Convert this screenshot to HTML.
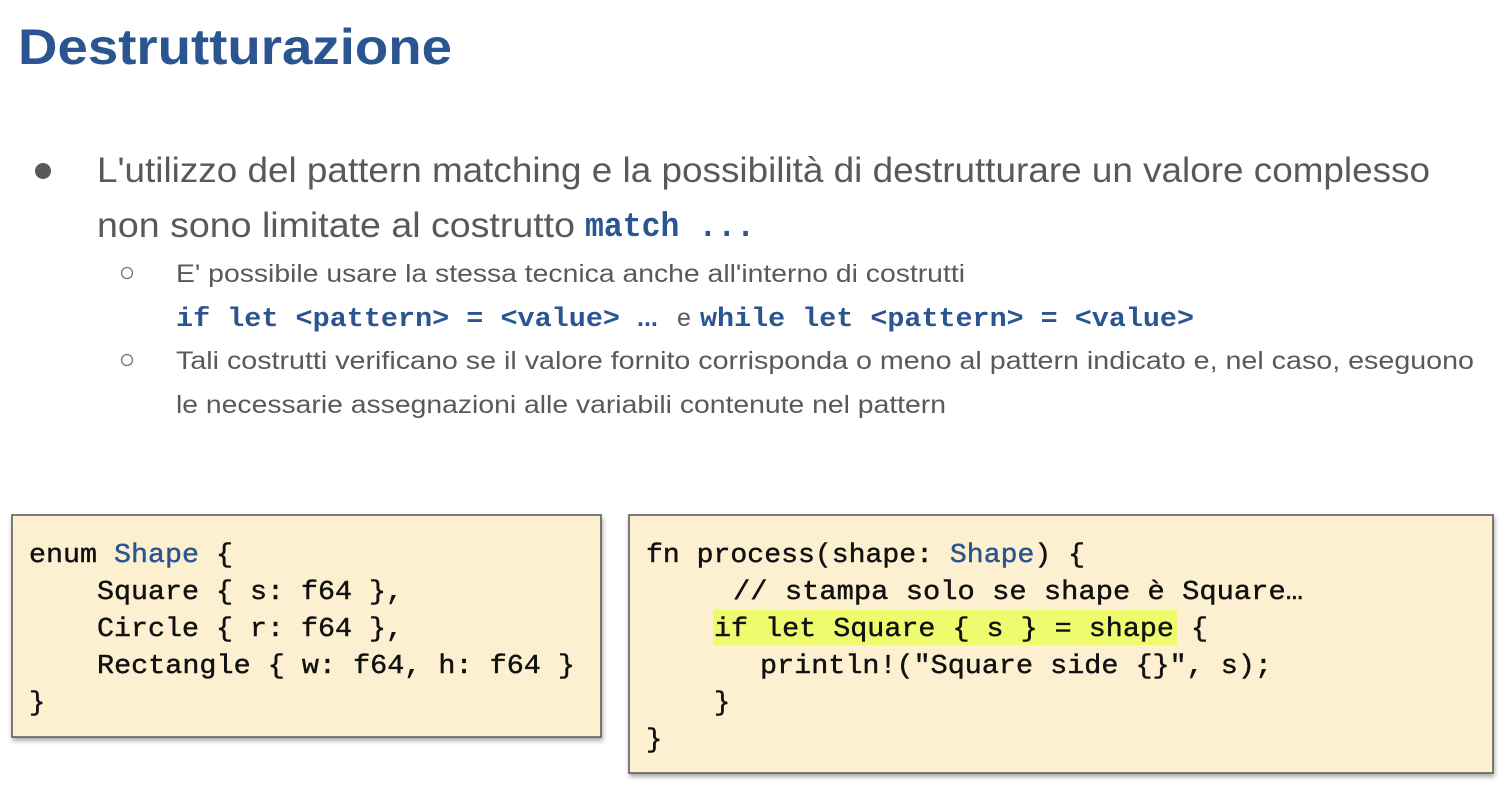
<!DOCTYPE html>
<html><head><meta charset="utf-8"><style>
html,body{margin:0;padding:0;background:#fff;}
svg{display:block;}
.s{font-family:"Liberation Sans",sans-serif;fill:#595959;}
.m{font-family:"Liberation Mono",monospace;}
.b{font-weight:bold;fill:#2b5591;}
.c{font-family:"Liberation Mono",monospace;font-size:27px;fill:#111;stroke:#111;stroke-width:0.45;}
.c tspan{stroke:#2b5591;}
</style></head><body>
<svg width="1512" height="796" viewBox="0 0 1512 796" xmlns="http://www.w3.org/2000/svg">
<defs>
<filter id="sh" x="-5%" y="-5%" width="110%" height="115%"><feDropShadow dx="1" dy="3" stdDeviation="2.5" flood-color="#000" flood-opacity="0.35"/></filter>
</defs>
<text x="18" y="64" font-family="Liberation Sans, sans-serif" font-weight="bold" font-size="50" fill="#2b5591" textLength="434" lengthAdjust="spacingAndGlyphs">Destrutturazione</text>

<circle cx="43" cy="171" r="8" fill="#595959"/>
<text class="s" x="97" y="182" font-size="35" textLength="1333" lengthAdjust="spacingAndGlyphs">L'utilizzo del pattern matching e la possibilità di destrutturare un valore complesso</text>
<text class="s" x="97" y="237" font-size="35" textLength="478" lengthAdjust="spacingAndGlyphs">non sono limitate al costrutto</text>
<text class="m b" x="585" y="236" font-size="34" textLength="170" lengthAdjust="spacingAndGlyphs">match ...</text>

<circle cx="127" cy="273" r="5.5" fill="none" stroke="#777" stroke-width="1.3"/>
<text class="s" x="176" y="282" font-size="25" textLength="789" lengthAdjust="spacingAndGlyphs">E' possibile usare la stessa tecnica anche all'interno di costrutti</text>
<text class="m b" x="176" y="326" font-size="27" textLength="444" lengthAdjust="spacingAndGlyphs">if let &lt;pattern&gt; = &lt;value&gt;</text>
<text class="s b" x="637" y="326" font-size="25" style="fill:#2b5591">...</text>
<text class="s" x="677" y="326" font-size="25">e</text>
<text class="m b" x="700" y="326" font-size="27" textLength="494" lengthAdjust="spacingAndGlyphs">while let &lt;pattern&gt; = &lt;value&gt;</text>
<circle cx="127" cy="360" r="5.5" fill="none" stroke="#777" stroke-width="1.3"/>
<text class="s" x="176" y="369" font-size="25" textLength="1298" lengthAdjust="spacingAndGlyphs">Tali costrutti verificano se il valore fornito corrisponda o meno al pattern indicato e, nel caso, eseguono</text>
<text class="s" x="176" y="413" font-size="25" textLength="770" lengthAdjust="spacingAndGlyphs">le necessarie assegnazioni alle variabili contenute nel pattern</text>

<rect x="12" y="515" width="589" height="222" fill="#fcf0d0" stroke="#555" stroke-width="1.5" filter="url(#sh)"/>
<text class="c" x="29" y="562" textLength="204" lengthAdjust="spacingAndGlyphs">enum <tspan fill="#2b5591">Shape</tspan> {</text>
<text class="c" x="97" y="599" textLength="306" lengthAdjust="spacingAndGlyphs">Square { s: f64 },</text>
<text class="c" x="97" y="636" textLength="306" lengthAdjust="spacingAndGlyphs">Circle { r: f64 },</text>
<text class="c" x="97" y="673" textLength="478" lengthAdjust="spacingAndGlyphs">Rectangle { w: f64, h: f64 }</text>
<text class="c" x="29" y="710">}</text>

<rect x="629" y="515" width="864" height="258" fill="#fcf0d0" stroke="#555" stroke-width="1.5" filter="url(#sh)"/>
<rect x="713" y="610" width="464" height="35" fill="#eefb6e"/>
<text class="c" x="646" y="562" textLength="439" lengthAdjust="spacingAndGlyphs">fn process(shape: <tspan fill="#2b5591">Shape</tspan>) {</text>
<text class="c" x="733" y="599" textLength="570" lengthAdjust="spacingAndGlyphs">// stampa solo se shape è Square…</text>
<text class="c" x="714" y="636" textLength="494" lengthAdjust="spacingAndGlyphs">if let Square { s } = shape {</text>
<text class="c" x="760" y="673" textLength="512" lengthAdjust="spacingAndGlyphs">println!("Square side {}", s);</text>
<text class="c" x="714" y="710">}</text>
<text class="c" x="646" y="747">}</text>
</svg>
</body></html>
